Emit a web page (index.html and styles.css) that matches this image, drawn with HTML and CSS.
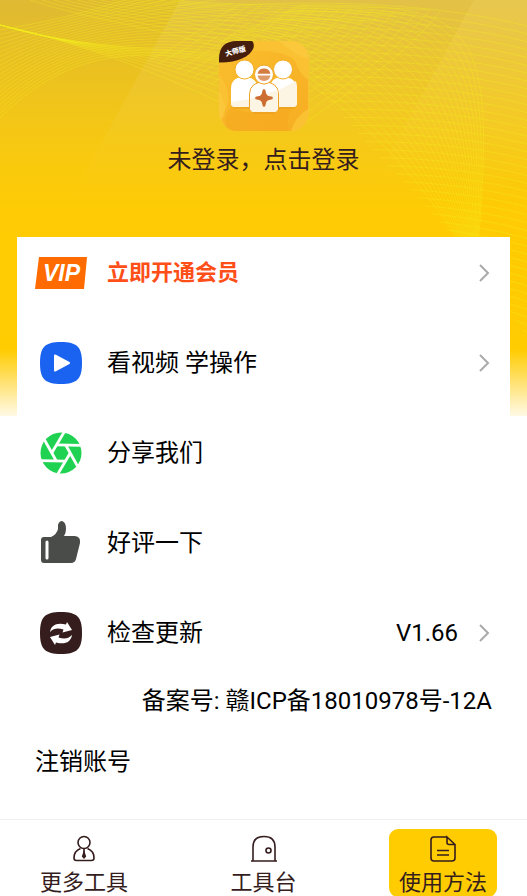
FILE: index.html
```html
<!DOCTYPE html>
<html lang="zh-CN">
<head>
<meta charset="utf-8">
<meta name="viewport" content="width=device-width, initial-scale=1">
<title>我的</title>
<link rel="stylesheet" href="styles.css">
</head>
<body>
<div class="page">
  <div class="backdrop" aria-hidden="true">
    <svg class="mesh" viewBox="0 0 527 416" preserveAspectRatio="none">
      <defs>
        <linearGradient id="band" x1="0" y1="0" x2="0" y2="1">
          <stop offset="0" stop-color="#fff" stop-opacity=".1"/>
          <stop offset="1" stop-color="#fff" stop-opacity="0"/>
        </linearGradient>
        <linearGradient id="side" x1="0" y1="0" x2="0" y2="1">
          <stop offset="0" stop-color="#ffe070" stop-opacity=".2"/>
          <stop offset="1" stop-color="#ffe070" stop-opacity="0"/>
        </linearGradient>
      </defs>
      <path fill="url(#band)" d="M180 0H527V200H70z"/>
      <path fill="url(#side)" d="M474 0H527V180H375z"/>
      <g id="lines" class="lines"></g>
    </svg>
  </div>

  <header class="profile">
    <svg class="logo" viewBox="0 0 90 90" role="img" aria-label="大师版">
      <defs>
        <linearGradient id="tile" x1="0" y1="0" x2="1" y2="1">
          <stop offset="0" stop-color="#f9bd2d"/>
          <stop offset="1" stop-color="#f7ad22"/>
        </linearGradient>
        <clipPath id="round"><rect width="90" height="90" rx="18"/></clipPath>
      </defs>
      <g clip-path="url(#round)">
        <rect width="90" height="90" fill="#fac232"/>
        <path fill="url(#tile)" d="M0 24Q24 7 48 10T76 20Q80 32 89 39V68Q76 76 72 90H10Q0 80 4 72Q12 62 8 48Q3 36 0 34z"/>
        <path fill="#f6a51c" opacity=".5" d="M12 66Q40 80 75 60Q68 74 68 90H10Q2 78 12 66z"/>
        <path fill="#fbc941" opacity=".6" d="M60 0Q78 16 90 18V0zM0 50Q10 68 3 78L0 76z"/>
      </g>
      <path fill="#e89a18" opacity=".5" d="M12 62H78Q78 68 73 68H59Q58 73 54 73H36Q32 73 31 68H17Q12 68 12 62z"/>
      <path fill="#fff" d="M12 48Q12 36 25 36T39 48V66H16Q12 66 12 62z"/>
      <path fill="#fff" d="M51 48Q51 36 64 36T78 48V62Q78 66 74 66H51z"/>
      <path fill="#fdf5e3" d="M12 61L31 58V66H16Q12 66 12 62zM58 50L77 40Q78 43 78 48V62Q78 66 74 66H58z"/>
      <circle cx="25.500" cy="28.500" r="9.500" fill="#fff" stroke="#f4ad25"/>
      <circle cx="64" cy="28.500" r="9.500" fill="#fff" stroke="#f4ad25"/>
      <path fill="#fff" stroke="#efa325" d="M30.500 53Q31 41 45 41T59.500 53V67Q59 71.500 55 71.500H35Q31 71.500 30.500 67z"/>
      <path fill="#fdf5e3" d="M31 58L58.800 49V67Q58.500 71 55 71H35Q31.500 71 31 67z"/>
      <circle cx="45" cy="33.500" r="9.500" fill="#fff" stroke="#efa325"/>
      <path fill="#d47d42" d="M38.600 32.800a6.500 6.500 0 0 1 12.800 0z"/>
      <path fill="#df9a6b" d="M38.600 34.600a6.500 6.500 0 0 0 12.800 0z"/>
      <path fill="#cc6d31" d="M45 48Q46.500 48 46.800 51Q47.200 55 51 55.300Q54 55.500 54 57T51 58.700Q47.200 59 46.800 63Q46.500 66 45 66T43.200 63Q42.800 59 39 58.700Q36 58.500 36 57T39 55.300Q42.800 55 43.200 51Q43.500 48 45 48z"/>
      <path fill="#451e0d" d="M0 21.500V18Q0 0 18 0H33Q35.500 2 34.500 7C31 16 17 22 0 21.500z"/>
      <text class="badge" transform="translate(7 15.500) rotate(-16)">大师版</text>
    </svg>
    <a class="login" href="#login">未登录，点击登录</a>
  </header>

  <main class="card">
    <ul class="menu">
      <li><a class="row" href="#vip">
        <span class="icon"><svg width="52" height="34" viewBox="0 0 52 34"><path fill="#ff6b00" d="M4 1H52L49 33H0z"/><text class="vip" x="8" y="25">VIP</text></svg></span>
        <span class="label promo">立即开通会员</span>
        <svg class="chevron" viewBox="0 0 12 20"><path d="M2 2L10 10L2 18"/></svg>
      </a></li>
      <li><a class="row" href="#video">
        <span class="icon"><svg width="42" height="42" viewBox="0 0 42 42"><path fill="#1a62f0" d="M21 0C37 0 42 5 42 21S37 42 21 42S0 37 0 21S5 0 21 0z"/><path fill="#fff" stroke="#fff" stroke-width="2" stroke-linejoin="round" d="M15 13.500L29 21L15 28.500z"/></svg></span>
        <span class="label">看视频 学操作</span>
        <svg class="chevron" viewBox="0 0 12 20"><path d="M2 2L10 10L2 18"/></svg>
      </a></li>
      <li><a class="row" href="#share">
        <span class="icon"><svg width="42" height="42" viewBox="0 0 42 42">
          <circle cx="21" cy="21" r="20.500" fill="#1fd251"/>
          <g stroke="#fff" stroke-width="2.800" fill="none">
            <path d="M4 7L16.300 29"/>
            <path d="M4 7L16.300 29" transform="rotate(60 21 21)"/>
            <path d="M4 7L16.300 29" transform="rotate(120 21 21)"/>
            <path d="M4 7L16.300 29" transform="rotate(180 21 21)"/>
            <path d="M4 7L16.300 29" transform="rotate(240 21 21)"/>
            <path d="M4 7L16.300 29" transform="rotate(300 21 21)"/>
          </g>
        </svg></span>
        <span class="label">分享我们</span>
      </a></li>
      <li><a class="row" href="#rate">
        <span class="icon"><svg width="42" height="44" viewBox="0 0 42 44"><path fill="#4a4c49" d="M4 16H11Q17 13 18 8V4Q19 0 22 0Q26 1 26 8Q26 12 24 15H35Q41 16 40 22L36 38Q35 42 31 42H4Q1 42 1 39V19Q1 16 4 16z"/><path stroke="#fff" stroke-width="3" stroke-linecap="round" d="M7 21V37"/></svg></span>
        <span class="label">好评一下</span>
      </a></li>
      <li><a class="row" href="#update">
        <span class="icon"><svg width="42" height="42" viewBox="0 0 42 42"><path fill="#351d1d" d="M21 0C37 0 42 5 42 21S37 42 21 42S0 37 0 21S5 0 21 0z"/><path fill="#fff" d="M10 20C11 13 17 10 26 12.500L27 10L32 18L22.500 20.500L23.500 17.500C18 16 14 16 10 20z"/><path fill="#fff" transform="rotate(180 21 21.500)" d="M10 20C11 13 17 10 26 12.500L27 10L32 18L22.500 20.500L23.500 17.500C18 16 14 16 10 20z"/></svg></span>
        <span class="label">检查更新</span>
        <span class="version">V1.66</span>
        <svg class="chevron" viewBox="0 0 12 20"><path d="M2 2L10 10L2 18"/></svg>
      </a></li>
    </ul>
    <p class="record">备案号: 赣ICP备18010978号-12A</p>
    <a class="cancel" href="#cancel">注销账号</a>
  </main>

  <nav class="tabs">
    <button class="tab" type="button">
      <svg width="28" height="28" viewBox="0 0 28 28"><circle cx="14" cy="7.500" r="6"/><path d="M10.500 13.500Q4 16 4 23Q4 25.500 6.500 25.500H21.500Q24 25.500 24 23Q24 16 17.500 13.500M14 14V18"/><path class="solid" d="M14 15L16.200 21.500L14 24L11.800 21.500z"/></svg>
      更多工具
    </button>
    <button class="tab" type="button">
      <svg width="28" height="28" viewBox="0 0 28 28"><path d="M1 26H27M3 26V12Q3 1.500 14 1.500T25 12V26"/><circle cx="18.500" cy="15.500" r="2.500"/></svg>
      工具台
    </button>
    <button class="tab active" type="button">
      <svg width="28" height="28" viewBox="0 0 28 28"><path d="M18 2H5Q2 2 2 5V23Q2 26 5 26H23Q26 26 26 23V9.500L18 2V7.500Q18 9.500 20 9.500H26M8 15.500H20M8 20H20"/></svg>
      使用方法
    </button>
  </nav>
</div>
<script src="mesh.js"></script>
</body>
</html>
```
FILE: styles.css
```css
* {
  box-sizing: border-box;
}

body {
  margin: 0;
  background: #fff;
  color: #000;
  font-family: Roboto, "Noto Sans CJK SC", sans-serif;
  font-size: 24px;
  line-height: 36px;
}

a {
  color: inherit;
  text-decoration: none;
}

.page {
  position: relative;
  display: flex;
  flex-direction: column;
  height: 100vh;
  overflow: hidden;
}

.backdrop {
  position: absolute;
  inset: 0 0 auto;
  height: 416px;
  background: linear-gradient(#dfba33 0, #e9c023 60px, #f6c813 140px, #fecb04 210px, #ffcc02 350px, #fff9e6 416px);
}

.mesh {
  display: block;
  width: 100%;
  height: 100%;
}

.lines {
  fill: none;
  stroke: #f2ec1c;
  stroke-width: 1;
  stroke-opacity: 0.34;
}

.profile {
  position: relative;
  display: flex;
  flex-direction: column;
  align-items: center;
  gap: 11px;
  padding: 41px 0 59px;
}

.logo {
  width: 90px;
  height: 90px;
}

.badge {
  fill: #fff;
  font-size: 7px;
  font-weight: 900;
}

.login {
  color: #351d1d;
}

.card {
  position: relative;
  flex: 1;
  margin: 0 17px;
  background: #fff;
}

.menu {
  display: grid;
  gap: 18px;
  margin: 0;
  padding: 0;
  list-style: none;
}

.row {
  display: flex;
  align-items: center;
  gap: 20px;
  height: 72px;
  padding: 0 20px 0 18px;
}

.icon {
  display: flex;
  justify-content: center;
  width: 52px;
}

.vip {
  fill: #fff;
  font-family: "Liberation Sans", sans-serif;
  font-size: 23px;
  font-style: italic;
  font-weight: 700;
}

.label {
  flex: 1;
}

.promo {
  color: #ff4f18;
  font-size: 22px;
  font-weight: 700;
}

.chevron {
  width: 12px;
  height: 20px;
  fill: none;
  stroke: #aaa;
  stroke-width: 2;
}

.record {
  margin: 14px 18px 0;
  text-align: right;
}

.cancel {
  display: block;
  margin: 25px 18px 0;
}

.tabs {
  position: relative;
  display: flex;
  flex: none;
  justify-content: space-between;
  height: 77px;
  padding: 9px 30px 0;
  border-top: 1px solid #f0f0f0;
  background: #fff;
}

.tab {
  display: flex;
  flex-direction: column;
  align-items: center;
  gap: 5px;
  width: 108px;
  height: 68px;
  padding: 6px 0 0;
  border: 0;
  border-radius: 9px;
  background: none;
  color: #351d1d;
  font: inherit;
  font-size: 22px;
  line-height: 30px;
}

.tab svg {
  flex: none;
  fill: none;
  stroke: #351d1d;
  stroke-width: 1.6;
}

.tab .solid {
  fill: #351d1d;
  stroke: none;
}

.active {
  background: #ffcc02;
}
```
FILE: mesh.js
```js
// Each family blends from one cubic curve to another in equal steps.
const families = [
  { from: [220, 40, 330, 80, 400, 150, 462, 246], to: [300, 5, 470, 5, 498, 12, 478, 246], steps: 22 },
  { from: [240, 5, 330, 0, 440, 4, 527, 26], to: [462, 246, 480, 250, 505, 256, 527, 262], steps: 30 },
  { from: [468, 255, 490, 260, 510, 265, 527, 270], to: [522, 330, 524, 331, 526, 332, 527, 333], steps: 8 },
  { from: [0, 118, 80, 38, 160, 44, 308, 82], to: [0, 30, 60, 20, 140, 0, 200, -30], steps: 20 },
  { from: [0, 25, 90, 45, 160, 75, 220, 102], to: [0, 25, 100, 56, 220, 45, 308, 66], steps: 9 },
  { from: [30, 0, 90, 20, 160, 28, 230, 50], to: [170, 0, 230, 6, 320, 4, 430, 10], steps: 12 },
  { from: [150, 60, 190, 40, 210, 20, 240, 4], to: [306, 122, 350, 92, 400, 60, 440, 12], steps: 18 }
];

const group = document.getElementById("lines");

for (const { from, to, steps } of families) {
  for (let i = 0; i <= steps; i++) {
    const p = from.map((v, k) => v + (to[k] - v) * i / steps);
    const path = document.createElementNS("http://www.w3.org/2000/svg", "path");
    path.setAttribute("d", `M${p[0]} ${p[1]}C${p.slice(2).join(" ")}`);
    group.append(path);
  }
}
```
